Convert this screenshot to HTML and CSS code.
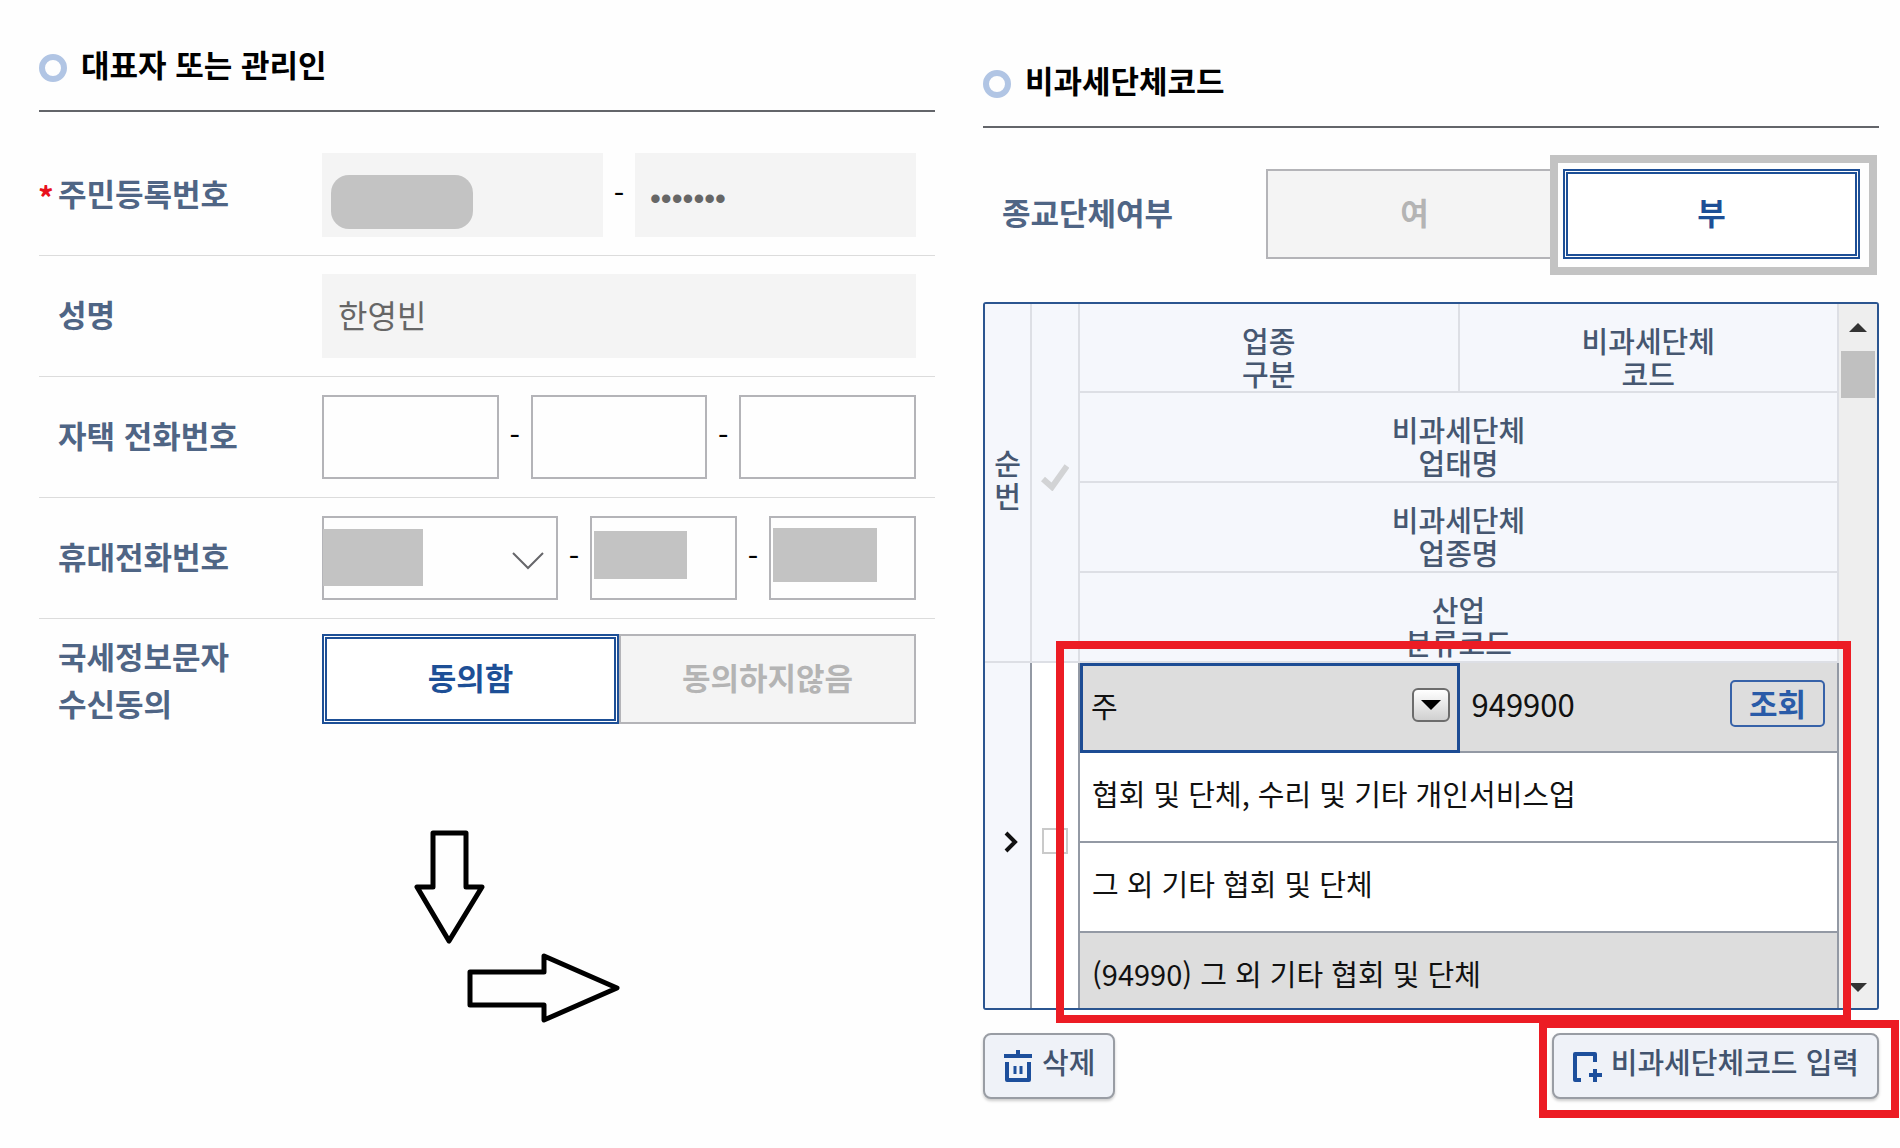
FILE: index.html
```html
<!DOCTYPE html>
<html lang="ko">
<head>
<meta charset="utf-8">
<title>대표자 또는 관리인 / 비과세단체코드</title>
<link rel="stylesheet" href="styles.css">
</head>
<body>
<main class="page">
  <section class="panel">
    <h2 class="title"><span class="ring"></span>대표자 또는 관리인</h2>
    <form class="form">
      <div class="row">
        <label class="label required" for="rrn1">주민등록번호</label>
        <div class="fields">
          <div class="slot"><input class="input readonly" id="rrn1" type="text" readonly><span class="mask mask-rrn"></span></div>
          <span class="dash">-</span>
          <div class="slot"><input class="input readonly secret" type="password" value="0000000" readonly aria-label="주민등록번호 뒷자리"></div>
        </div>
      </div>
      <div class="row">
        <label class="label" for="name">성명</label>
        <div class="fields">
          <div class="slot"><input class="input readonly" id="name" type="text" value="한영빈" readonly></div>
        </div>
      </div>
      <div class="row">
        <label class="label" for="tel1">자택 전화번호</label>
        <div class="fields">
          <div class="slot"><input class="input" id="tel1" type="text"></div>
          <span class="dash">-</span>
          <div class="slot"><input class="input" type="text" aria-label="자택 전화번호 가운데"></div>
          <span class="dash">-</span>
          <div class="slot"><input class="input" type="text" aria-label="자택 전화번호 끝"></div>
        </div>
      </div>
      <div class="row">
        <label class="label" for="mob1">휴대전화번호</label>
        <div class="fields mobile">
          <div class="slot">
            <select class="input" id="mob1"><option></option></select>
            <svg class="chevron" viewBox="0 0 32 18" aria-hidden="true"><path d="M1 1l15 15L31 1"/></svg>
            <span class="mask mask-mob1"></span>
          </div>
          <span class="dash">-</span>
          <div class="slot"><input class="input" type="text" aria-label="휴대전화번호 가운데"><span class="mask mask-mob2"></span></div>
          <span class="dash">-</span>
          <div class="slot"><input class="input" type="text" aria-label="휴대전화번호 끝"><span class="mask mask-mob3"></span></div>
        </div>
      </div>
      <div class="row row-last">
        <span class="label">국세정보문자<br>수신동의</span>
        <div class="toggle">
          <button type="button" class="choice selected">동의함</button>
          <button type="button" class="choice">동의하지않음</button>
        </div>
      </div>
    </form>
    <svg class="arrows" viewBox="0 0 208 196" aria-hidden="true">
      <path d="M19 4h33v54h16L35 112 3 58h16z"/>
      <path d="M56 143h74v-16l73 32-73 32v-15H56z"/>
    </svg>
  </section>

  <section class="panel panel-codes">
    <h2 class="title"><span class="ring"></span>비과세단체코드</h2>
    <div class="row row-religion">
      <span class="label">종교단체여부</span>
      <div class="toggle">
        <button type="button" class="choice">여</button>
        <div class="marked"><button type="button" class="choice selected">부</button></div>
      </div>
    </div>

    <div class="grid-wrap">
      <div class="grid">
        <table class="table">
          <colgroup><col class="col-no"><col class="col-check"><col><col></colgroup>
          <thead>
            <tr class="first">
              <th class="side" rowspan="4">순<br>번</th>
              <th class="side" rowspan="4"><svg class="check" viewBox="0 0 28 28" aria-hidden="true"><path d="M2 16l9 8L26 3"/></svg></th>
              <th>업종<br>구분</th>
              <th>비과세단체<br>코드</th>
            </tr>
            <tr><th colspan="2">비과세단체<br>업태명</th></tr>
            <tr><th colspan="2">비과세단체<br>업종명</th></tr>
            <tr><th colspan="2">산업<br>분류코드</th></tr>
          </thead>
          <tbody>
            <tr>
              <td class="index" rowspan="4"><svg class="current" viewBox="0 0 14 22" aria-hidden="true"><path d="M2 2l9 9-9 9"/></svg></td>
              <td class="pick" rowspan="4"><input class="tick" type="checkbox" aria-label="행 선택"></td>
              <td class="active">
                <div class="kind">
                  <select class="kind-select" aria-label="업종구분"><option>주</option></select>
                  <span class="drop"><svg viewBox="0 0 20 10" aria-hidden="true"><path d="M0 0h20L10 10z"/></svg></span>
                </div>
              </td>
              <td class="filled"><div class="code">949900<button type="button" class="lookup">조회</button></div></td>
            </tr>
            <tr><td colspan="2">협회 및 단체, 수리 및 기타 개인서비스업</td></tr>
            <tr><td colspan="2">그 외 기타 협회 및 단체</td></tr>
            <tr><td class="filled" colspan="2">(94990) 그 외 기타 협회 및 단체</td></tr>
          </tbody>
        </table>
        <div class="scrollbar">
          <svg class="tri" viewBox="0 0 18 9" aria-hidden="true"><path d="M0 9L9 0l9 9z"/></svg>
          <span class="thumb"></span>
          <svg class="tri tri-down" viewBox="0 0 18 9" aria-hidden="true"><path d="M0 0h18L9 9z"/></svg>
        </div>
      </div>
      <span class="frame frame-grid"></span>
    </div>

    <div class="actions">
      <button type="button" class="action">
        <svg class="icon" viewBox="0 0 30 34" aria-hidden="true"><path d="M1 7h28M15 1v6M4 13v18h22V13"/><path class="thin" d="M12 17v8M18 17v8"/></svg>삭제
      </button>
      <div class="action-wrap">
        <button type="button" class="action">
          <svg class="icon" viewBox="0 0 30 34" aria-hidden="true"><path d="M9 31H3V5h20v8M23 20v13M17 26h13"/></svg>비과세단체코드 입력
        </button>
        <span class="frame frame-add"></span>
      </div>
    </div>
  </section>
</main>
</body>
</html>
```

FILE: styles.css
```css
* { box-sizing: border-box; }

body {
  margin: 0;
  background: #fefefe;
  color: #111;
  font-family: "Noto Sans CJK KR", sans-serif;
  font-size: 30px;
}

button, input, select { font: inherit; color: inherit; margin: 0; }

.page {
  display: grid;
  grid-template-columns: 1fr 1fr;
  gap: 48px;
  padding: 40px 21px 28px 39px;
}

.panel { min-width: 0; }
.panel-codes { padding-top: 16px; }

.title {
  display: flex;
  align-items: center;
  gap: 14px;
  height: 72px;
  margin: 0;
  padding-bottom: 22px;
  border-bottom: 2px solid #63656a;
  color: #000;
  font-size: 31px;
  font-weight: 700;
  line-height: 44px;
}
.ring {
  width: 28px;
  height: 28px;
  margin-top: 8px;
  border: 6px solid #b1c5e4;
  border-radius: 50%;
}

/* form rows */
.form { padding-top: 23px; }
.row {
  display: grid;
  grid-template-columns: 264px 1fr;
  align-items: center;
  padding: 18px 19px;
  border-bottom: 1px solid #dcdcdc;
}
.row-last { padding-top: 13px; border-bottom: 0; }
.row-religion { padding-top: 41px; padding-bottom: 43px; border-bottom: 0; }

.label {
  position: relative;
  padding-bottom: 6px;
  color: #4f6585;
  font-size: 31px;
  font-weight: 700;
  line-height: 47px;
}
.row-last .label { padding-bottom: 0; }
.required::before {
  content: "*";
  position: absolute;
  top: 4px;
  left: -20px;
  color: #e8101c;
}

.fields { display: flex; align-items: center; }
.slot { position: relative; flex: 1 1 0; min-width: 0; }
.mobile .slot:first-child { flex: 0 0 236px; }
.dash { width: 32px; padding-bottom: 6px; color: #000; text-align: center; }

.input {
  display: block;
  width: 100%;
  height: 84px;
  padding: 0 14px 4px;
  border: 2px solid #b4b4b8;
  border-radius: 0;
  background: #fefefe;
  appearance: none;
  outline: 0;
}
.readonly { border-color: #f4f4f4; background: #f4f4f4; color: #666; font-size: 32px; }
.secret { padding: 8px 13px 0; font-family: "Liberation Sans", sans-serif; font-size: 31px; }

.chevron {
  position: absolute;
  top: 36px;
  right: 14px;
  width: 32px;
  height: 18px;
  fill: none;
  stroke: #66666a;
  stroke-width: 2;
}

.mask { position: absolute; background: #c3c3c3; }
.mask-rrn { left: 9px; top: 22px; width: 142px; height: 54px; border-radius: 18px; }
.mask-mob1 { left: 1px; top: 13px; width: 100px; height: 57px; }
.mask-mob2 { left: 4px; top: 15px; width: 93px; height: 48px; }
.mask-mob3 { left: 4px; top: 12px; width: 104px; height: 54px; }

.toggle { display: grid; grid-template-columns: 1fr 1fr; }
.choice {
  width: 100%;
  height: 90px;
  padding: 0 0 5px;
  border: 2px solid #b4b4b8;
  background: #f4f4f4;
  color: #b4b4b4;
  font-size: 31px;
  font-weight: 700;
}
.choice.selected {
  position: relative;
  border: 5px double #1d4f96;
  background: #fff;
  color: #1d4f96;
}
.marked { position: relative; }
.marked::before {
  content: "";
  position: absolute;
  inset: -14px -17px -16px -13px;
  border: 8px solid #c3c3c3;
  background: #fefefe;
}

.arrows {
  display: block;
  width: 208px;
  height: 196px;
  margin: 85px 0 0 375px;
  fill: none;
  stroke: #000;
  stroke-width: 5;
  stroke-linejoin: round;
}

/* code grid */
.grid-wrap { position: relative; }
.grid {
  display: flex;
  align-items: stretch;
  height: 708px;
  overflow: hidden;
  border: 2px solid #2b5590;
  border-radius: 3px;
}
.table {
  flex: 1;
  align-self: flex-start;
  width: 100%;
  table-layout: fixed;
  border-spacing: 0;
  border-collapse: separate;
  line-height: 33px;
}
.col-no { width: 47px; }
.col-check { width: 48px; }

.table tr { height: 90px; }
.table .first { height: 89px; }
.table th {
  padding: 18px 0 0;
  border-right: 2px solid #dddfe5;
  border-bottom: 2px solid #dddfe5;
  background: #f5f7fc;
  color: #465771;
  font-size: 29px;
  font-weight: 500;
}
.table .side { padding: 0 0 8px; }
.table td {
  padding: 0 12px 8px;
  border-right: 2px solid #9399a4;
  border-bottom: 2px solid #9399a4;
  background: #fff;
  font-size: 29px;
}
.table .index { padding: 0 0 4px 6px; background: #f5f7fc; text-align: center; }
.table .pick { padding: 0 0 3px; text-align: center; }
.table .filled { background: #ddd; }
.table .active { padding: 0 4px 6px 8px; border: 3px solid #1d4c94; background: #ddd; }

.check { width: 28px; height: 28px; fill: none; stroke: #d2d3d5; stroke-width: 6; }
.current { width: 14px; height: 22px; fill: none; stroke: #111; stroke-width: 4; }
.tick {
  display: block;
  width: 26px;
  height: 26px;
  margin: 0 auto;
  border: 2px solid #cacaca;
  background: #fff;
  appearance: none;
}

.kind { position: relative; }
.kind-select {
  display: block;
  width: 100%;
  height: 60px;
  padding: 0;
  border: 0;
  background: transparent;
  appearance: none;
}
.drop {
  position: absolute;
  top: 13px;
  right: 3px;
  display: flex;
  align-items: center;
  justify-content: center;
  width: 38px;
  height: 34px;
  border: 2px solid #6c6c6c;
  border-radius: 6px;
  background: linear-gradient(#fff, #d0d0d0);
  pointer-events: none;
}
.drop svg { width: 20px; height: 10px; }

.code { display: flex; align-items: center; justify-content: space-between; font-size: 31px; }
.lookup {
  width: 95px;
  height: 47px;
  padding: 0;
  border: 2px solid #3762a8;
  border-radius: 5px;
  background: transparent;
  color: #2a5ba8;
  font-weight: 700;
  line-height: 40px;
}

.scrollbar {
  display: flex;
  flex: 0 0 38px;
  flex-direction: column;
  align-items: center;
  padding: 19px 0 16px;
  background: #eee;
}
.tri { width: 18px; height: 9px; fill: #333; }
.thumb { width: 34px; height: 47px; margin-top: 19px; background: #c0c0c0; }
.tri-down { margin-top: auto; }

.frame { position: absolute; border: 8px solid #ec1c24; pointer-events: none; }
.frame-grid { inset: 339px 28px -13px 73px; }
.frame-add { inset: -13px -20px -19px -13px; }

.actions { display: flex; justify-content: space-between; padding-top: 23px; }
.action-wrap { position: relative; }
.action {
  display: flex;
  align-items: center;
  gap: 9px;
  height: 66px;
  padding: 0 18px 10px;
  border: 2px solid #999da4;
  border-radius: 8px;
  background: #eff2f8;
  box-shadow: 0 2px 3px #ccc;
  color: #42546f;
  font-size: 29px;
  font-weight: 500;
}
.icon {
  width: 30px;
  height: 34px;
  margin-top: 10px;
  fill: none;
  stroke: #1d4f9c;
  stroke-width: 4;
  stroke-linejoin: round;
}
.icon .thin { stroke-width: 3; }
```
